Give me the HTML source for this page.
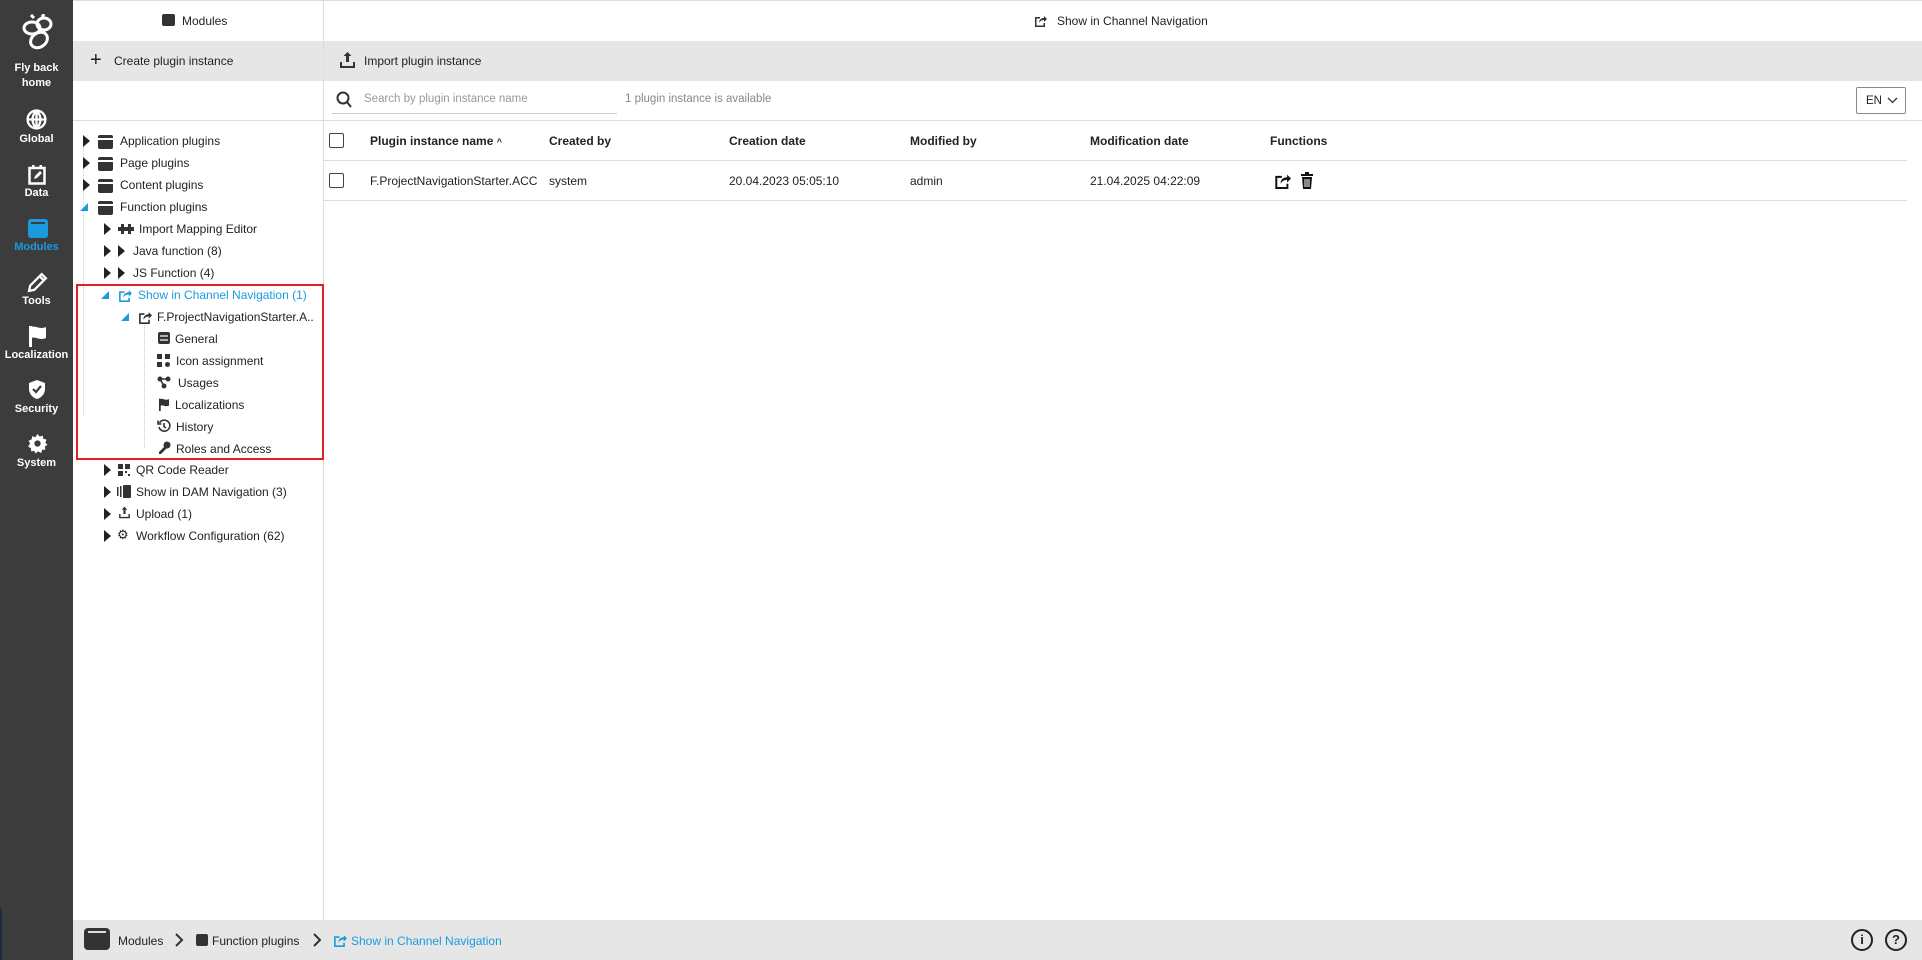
<!DOCTYPE html>
<html><head><meta charset="utf-8"><style>
*{box-sizing:border-box;margin:0;padding:0}
body{width:1922px;height:960px;position:relative;overflow:hidden;font-family:"Liberation Sans",Arial,sans-serif;font-size:12px;color:#222;background:#fff}
.a{position:absolute;white-space:nowrap}
#side{left:0;top:0;width:73px;height:960px;background:#3c3c3c}
.si{position:absolute;left:0;width:73px;text-align:center;color:#fff;font-size:11px;font-weight:bold}
.tri{width:0;height:0;border-top:6px solid transparent;border-bottom:6px solid transparent;border-left:7px solid #222}
.bl{width:0;height:0;border-left:8px solid transparent;border-bottom:8px solid #1a9be0}
.box{width:15px;height:14px;background:#333;border-radius:2px;border-top:3px solid #333;box-shadow:inset 0 2px 0 #fff}
.hl{height:1px;background:#ddd}
</style></head><body>
<div id="side" class="a">
<svg class="a" style="left:20px;top:14px" width="34" height="38" viewBox="0 0 34 38" fill="none" stroke="#fff" stroke-width="3"><ellipse cx="12" cy="14" rx="8" ry="6"/><ellipse cx="24" cy="10" rx="7" ry="6"/><ellipse cx="19" cy="26" rx="9" ry="7" transform="rotate(-35 19 26)"/><path d="M14 4l-3-3M22 3l2-3"/></svg>
<div class="si" style="top:61px;line-height:15px">Fly back<br>home</div>
<svg class="a" style="left:26px;top:109px" width="21" height="21" viewBox="0 0 20 20" fill="none" stroke="#fff" stroke-width="2.2"><circle cx="10" cy="10" r="8.5"/><path d="M1.5 10h17M10 1.5v17M10 1.5c-5 5-5 12 0 17M10 1.5c5 5 5 12 0 17"/></svg>
<div class="si" style="top:133px">Global</div>
<svg class="a" style="left:28px;top:164px" width="18" height="21" viewBox="0 0 18 21"><rect x="1.5" y="4" width="15" height="15.5" fill="none" stroke="#fff" stroke-width="2.5"/><rect x="4" y="1" width="2.5" height="4" fill="#fff"/><rect x="11.5" y="1" width="2.5" height="4" fill="#fff"/><path d="M6 15l1-3 5-5 2 2-5 5z" fill="#fff"/></svg>
<div class="si" style="top:187px">Data</div>
<div class="a" style="left:28px;top:219px;width:20px;height:19px;background:#1a9be0;border-radius:3px"><div style="margin:3px 3px;height:2px;background:#3c3c3c"></div></div>
<div class="si" style="top:241px;color:#1a9be0">Modules</div>
<svg class="a" style="left:27px;top:272px" width="21" height="21" viewBox="0 0 20 20" fill="none" stroke="#fff" stroke-width="2.2"><path d="M2 18l1-5L14 2l4 4L7 17z M12 4l4 4"/></svg>
<div class="si" style="top:295px">Tools</div>
<svg class="a" style="left:28px;top:325px" width="19" height="22" viewBox="0 0 19 22"><rect x="1" y="1" width="3" height="21" fill="#fff"/><path d="M3 2c5-2 8 3 15 0v11c-7 3-10-2-15 0z" fill="#fff"/></svg>
<div class="si" style="top:349px">Localization</div>
<svg class="a" style="left:28px;top:379px" width="18" height="21" viewBox="0 0 18 21"><path d="M9 1l8 3v6c0 5-4 9-8 10C5 19 1 15 1 10V4z" fill="#fff"/><path d="M5 10l3 3 5-6" stroke="#3c3c3c" stroke-width="2.2" fill="none"/></svg>
<div class="si" style="top:403px">Security</div>
<svg class="a" style="left:27px;top:433px" width="21" height="21" viewBox="0 0 20 20"><path d="M10 1l2 2.5 3-1 .5 3 3 .8-1 3 2 2-2.5 1.5.5 3-3 .2-1 3-3-1.5-2.5 2L7 17l-3 .5-.2-3-2.8-1.5L3 10 1.5 7.5 4.5 6 5 3l3 1z" fill="#fff"/><circle cx="10" cy="10" r="3" fill="#3c3c3c"/></svg>
<div class="si" style="top:457px">System</div>
<div class="a" style="left:0;top:908px;width:2px;height:52px;background:#1f2a4a"></div>
</div>

<div class="a" style="left:73px;top:0;width:1849px;height:1px;background:#ddd"></div>
<div class="a" style="left:162px;top:14px;width:13px;height:12px;background:#333;border-radius:2px"></div>
<div class="a" style="left:182px;top:14px">Modules</div>
<svg class="a" style="left:1034px;top:14px" width="13" height="13" viewBox="0 0 13 13"><path d="M1 3h5v1.5H2.5v7h7V9H11v4H1z" fill="#333"/><path d="M5 9c0-4 3-5 5-5V2l3 3-3 3V6c-2 0-4 1-5 3z" fill="#333"/></svg>
<div class="a" style="left:1057px;top:14px">Show in Channel Navigation</div>
<div class="a" style="left:73px;top:41px;width:1849px;height:40px;background:#e6e6e6"></div>
<div class="a" style="left:90px;top:51px;font-size:20px;font-weight:300;line-height:18px">+</div>
<div class="a" style="left:114px;top:54px">Create plugin instance</div>
<svg class="a" style="left:339px;top:51px" width="17" height="18" viewBox="0 0 17 18"><path d="M8.5 1l-4 4h2.5v6h3V5h2.5z" fill="#333"/><path d="M1 11v6h15v-6h-2v4H3v-4z" fill="#333"/></svg>
<div class="a" style="left:364px;top:54px">Import plugin instance</div>
<div class="a" style="left:323px;top:0;width:1px;height:920px;background:#ddd"></div>
<div class="a" style="left:73px;top:120px;width:250px;height:1px;background:#ddd"></div>

<svg class="a" style="left:336px;top:91px" width="16" height="17" viewBox="0 0 16 17" fill="none" stroke="#333" stroke-width="2"><circle cx="7" cy="7" r="5.5"/><path d="M11 11l4 5"/></svg>
<div class="a" style="left:364px;top:93px;color:#999;font-size:11.5px">Search by plugin instance name</div>
<div class="a" style="left:332px;top:113px;width:285px;height:1px;background:#ccc"></div>
<div class="a" style="left:625px;top:93px;color:#888;font-size:11.5px">1 plugin instance is available</div>
<div class="a" style="left:1856px;top:87px;width:50px;height:27px;border:1px solid #888;border-radius:2px;padding:7px 0 0 9px;font-size:11.5px">EN <svg width="11" height="8" viewBox="0 0 11 8" style="margin-left:2px"><path d="M1 2l4.5 4.5L10 2" stroke="#333" fill="none" stroke-width="1.3"/></svg></div>

<div class="a hl" style="left:323px;top:120px;width:1599px"></div>
<div class="a" style="left:329px;top:133px;width:15px;height:15px;border:1.5px solid #444;border-radius:2px"></div>
<div class="a" style="left:370px;top:134px;font-weight:bold">Plugin instance name <span style="font-size:9px">^</span></div>
<div class="a" style="left:549px;top:134px;font-weight:bold">Created by</div>
<div class="a" style="left:729px;top:134px;font-weight:bold">Creation date</div>
<div class="a" style="left:910px;top:134px;font-weight:bold">Modified by</div>
<div class="a" style="left:1090px;top:134px;font-weight:bold">Modification date</div>
<div class="a" style="left:1270px;top:134px;font-weight:bold">Functions</div>
<div class="a hl" style="left:323px;top:160px;width:1584px"></div>
<div class="a" style="left:329px;top:173px;width:15px;height:15px;border:1.5px solid #444;border-radius:2px"></div>
<div class="a" style="left:370px;top:174px">F.ProjectNavigationStarter.ACC</div>
<div class="a" style="left:549px;top:174px">system</div>
<div class="a" style="left:729px;top:174px">20.04.2023 05:05:10</div>
<div class="a" style="left:910px;top:174px">admin</div>
<div class="a" style="left:1090px;top:174px">21.04.2025 04:22:09</div>
<svg class="a" style="left:1274px;top:172px" width="17" height="17" viewBox="0 0 13 13"><path d="M1 3h5v1.5H2.5v7h7V9H11v4H1z" fill="#111"/><path d="M5 9c0-4 3-5 5-5V2l3 3-3 3V6c-2 0-4 1-5 3z" fill="#111"/></svg>
<svg class="a" style="left:1300px;top:172px" width="14" height="17" viewBox="0 0 14 17"><rect x="1" y="2" width="12" height="2" fill="#111"/><rect x="5" y="0" width="4" height="2" fill="#111"/><path d="M2 5h10l-1 12H3z" fill="#111"/><path d="M5 7v8M7 7v8M9 7v8" stroke="#fff" stroke-width="1"/></svg>
<div class="a hl" style="left:323px;top:200px;width:1584px"></div>

<div class="a" style="left:83px;top:136px;height:280px;border-left:1px dotted #ccc"></div>
<div class="a tri" style="left:83px;top:135px"></div><div class="a box" style="left:98px;top:135px"></div><div class="a" style="left:120px;top:134px">Application plugins</div>
<div class="a tri" style="left:83px;top:157px"></div><div class="a box" style="left:98px;top:157px"></div><div class="a" style="left:120px;top:156px">Page plugins</div>
<div class="a tri" style="left:83px;top:179px"></div><div class="a box" style="left:98px;top:179px"></div><div class="a" style="left:120px;top:178px">Content plugins</div>
<div class="a bl" style="left:80px;top:203px"></div><div class="a box" style="left:98px;top:201px"></div><div class="a" style="left:120px;top:200px">Function plugins</div>

<div class="a tri" style="left:104px;top:223px"></div>
<svg class="a" style="left:118px;top:223px" width="16" height="12" viewBox="0 0 16 12"><rect x="0" y="4" width="16" height="4" fill="#333"/><rect x="3" y="1" width="3" height="10" fill="#333"/><rect x="10" y="1" width="3" height="10" fill="#333"/></svg>
<div class="a" style="left:139px;top:222px">Import Mapping Editor</div>
<div class="a tri" style="left:104px;top:245px"></div><div class="a tri" style="left:118px;top:245px"></div><div class="a" style="left:133px;top:244px">Java function (8)</div>
<div class="a tri" style="left:104px;top:267px"></div><div class="a tri" style="left:118px;top:267px"></div><div class="a" style="left:133px;top:266px">JS Function (4)</div>
<div class="a bl" style="left:101px;top:291px"></div>
<svg class="a" style="left:118px;top:288px" width="14" height="14" viewBox="0 0 13 13"><path d="M1 3h5v1.5H2.5v7h7V9H11v4H1z" fill="#1a9be0"/><path d="M5 9c0-4 3-5 5-5V2l3 3-3 3V6c-2 0-4 1-5 3z" fill="#1a9be0"/></svg>
<div class="a" style="left:138px;top:288px;color:#1a9be0">Show in Channel Navigation (1)</div>
<div class="a bl" style="left:121px;top:313px"></div>
<svg class="a" style="left:138px;top:310px" width="14" height="14" viewBox="0 0 13 13"><path d="M1 3h5v1.5H2.5v7h7V9H11v4H1z" fill="#333"/><path d="M5 9c0-4 3-5 5-5V2l3 3-3 3V6c-2 0-4 1-5 3z" fill="#333"/></svg>
<div class="a" style="left:157px;top:310px">F.ProjectNavigationStarter.A..</div>
<div class="a" style="left:144px;top:325px;height:123px;border-left:1px dotted #ccc"></div>
<svg class="a" style="left:158px;top:332px" width="12" height="12" viewBox="0 0 12 12"><rect width="12" height="12" rx="2" fill="#333"/><path d="M2 4h8M2 8h8" stroke="#fff" stroke-width="1.2"/></svg><div class="a" style="left:175px;top:332px">General</div>
<svg class="a" style="left:157px;top:354px" width="13" height="13" viewBox="0 0 13 13" fill="#333"><rect x="0" y="0" width="5" height="5"/><rect x="8" y="0" width="5" height="5"/><rect x="0" y="8" width="5" height="5"/><circle cx="10.5" cy="10.5" r="2.5"/></svg><div class="a" style="left:176px;top:354px">Icon assignment</div>
<svg class="a" style="left:157px;top:376px" width="14" height="13" viewBox="0 0 14 13"><circle cx="3" cy="3" r="2.5" fill="#333"/><circle cx="11" cy="3" r="2.5" fill="#333"/><circle cx="7" cy="10" r="2.5" fill="#333"/><path d="M3 3h8M3 3l4 7" stroke="#333" stroke-width="1.5"/></svg><div class="a" style="left:178px;top:376px">Usages</div>
<svg class="a" style="left:158px;top:398px" width="12" height="13" viewBox="0 0 19 22"><rect x="1" y="1" width="3" height="21" fill="#333"/><path d="M3 2c5-2 8 3 15 0v11c-7 3-10-2-15 0z" fill="#333"/></svg><div class="a" style="left:175px;top:398px">Localizations</div>
<svg class="a" style="left:157px;top:419px" width="14" height="14" viewBox="0 0 14 14" fill="none" stroke="#333" stroke-width="1.6"><path d="M2.5 4A5.5 5.5 0 1 1 2 8"/><path d="M1 1.5v3.5h3.5" /><path d="M7 4v3.5l2 1.5"/></svg><div class="a" style="left:176px;top:420px">History</div>
<svg class="a" style="left:158px;top:441px" width="13" height="13" viewBox="0 0 13 13"><circle cx="9" cy="4" r="3.5" fill="#333"/><path d="M7 5L1 11v2h2l6-6z" fill="#333"/></svg><div class="a" style="left:176px;top:442px">Roles and Access</div>
<div class="a" style="left:76px;top:284px;width:248px;height:176px;border:2px solid #e31e24"></div>
<div class="a tri" style="left:104px;top:464px"></div>
<svg class="a" style="left:118px;top:464px" width="12" height="12" viewBox="0 0 12 12" fill="#333"><rect x="0" y="0" width="5" height="5"/><rect x="7" y="0" width="5" height="5"/><rect x="0" y="7" width="5" height="5"/><rect x="7" y="7" width="2" height="2"/><rect x="10" y="10" width="2" height="2"/></svg>
<div class="a" style="left:136px;top:463px">QR Code Reader</div>
<div class="a tri" style="left:104px;top:486px"></div>
<svg class="a" style="left:117px;top:485px" width="14" height="13" viewBox="0 0 14 13" fill="#333"><rect x="0" y="2" width="1.5" height="9"/><rect x="3" y="1" width="1.5" height="11"/><rect x="6" y="0" width="8" height="13" rx="1"/></svg>
<div class="a" style="left:136px;top:485px">Show in DAM Navigation (3)</div>
<div class="a tri" style="left:104px;top:508px"></div><svg class="a" style="left:118px;top:506px" width="13" height="13" viewBox="0 0 17 18"><path d="M8.5 1l-4 4h2.5v6h3V5h2.5z" fill="#333"/><path d="M1 11v6h15v-6h-2v4H3v-4z" fill="#333"/></svg><div class="a" style="left:136px;top:507px">Upload (1)</div>
<div class="a tri" style="left:104px;top:530px"></div><div class="a" style="left:117px;top:527px;font-size:13px">⚙</div><div class="a" style="left:136px;top:529px">Workflow Configuration (62)</div>

<div class="a" style="left:73px;top:920px;width:1849px;height:40px;background:#e6e6e6"></div>
<div class="a" style="left:84px;top:928px;width:26px;height:22px;background:#333;border-radius:4px"><div style="margin:3px 4px;height:2px;background:#ddd"></div></div>
<div class="a" style="left:118px;top:934px">Modules</div>
<svg class="a" style="left:174px;top:933px" width="10" height="14" viewBox="0 0 10 14"><path d="M2 1l6 6-6 6" stroke="#333" stroke-width="2" fill="none"/></svg>
<div class="a" style="left:196px;top:934px;width:12px;height:12px;background:#333;border-radius:2px"></div>
<div class="a" style="left:212px;top:934px">Function plugins</div>
<svg class="a" style="left:312px;top:933px" width="10" height="14" viewBox="0 0 10 14"><path d="M2 1l6 6-6 6" stroke="#333" stroke-width="2" fill="none"/></svg>
<svg class="a" style="left:333px;top:933px" width="14" height="14" viewBox="0 0 13 13"><path d="M1 3h5v1.5H2.5v7h7V9H11v4H1z" fill="#1a9be0"/><path d="M5 9c0-4 3-5 5-5V2l3 3-3 3V6c-2 0-4 1-5 3z" fill="#1a9be0"/></svg>
<div class="a" style="left:351px;top:934px;color:#1a9be0">Show in Channel Navigation</div>
<div class="a" style="left:1851px;top:929px;width:22px;height:22px;border:2px solid #222;border-radius:50%;text-align:center;font-weight:bold;font-size:13px;line-height:18px">i</div>
<div class="a" style="left:1885px;top:929px;width:22px;height:22px;border:2px solid #222;border-radius:50%;text-align:center;font-weight:bold;font-size:13px;line-height:18px">?</div>
</body></html>
